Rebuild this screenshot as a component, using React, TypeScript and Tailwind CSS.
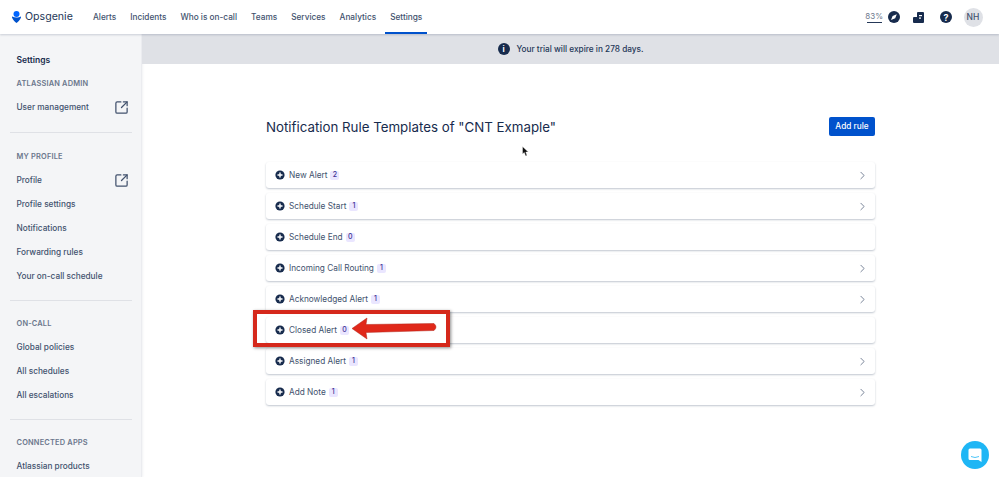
import { ChevronRight, SquareArrowOutUpRight } from 'lucide-react';

const navItems = ['Alerts', 'Incidents', 'Who is on-call', 'Teams', 'Services', 'Analytics', 'Settings'];

const rules = [
	{ name: 'New Alert', count: 2 },
	{ name: 'Schedule Start', count: 1 },
	{ name: 'Schedule End', count: 0 },
	{ name: 'Incoming Call Routing', count: 1 },
	{ name: 'Acknowledged Alert', count: 1 },
	{ name: 'Closed Alert', count: 0 },
	{ name: 'Assigned Alert', count: 1 },
	{ name: 'Add Note', count: 1 },
];

const sideGroups = [
	{ title: 'ATLASSIAN ADMIN', items: ['User management'], spacing: 'mt-[12px]' },
	{
		title: 'MY PROFILE',
		items: ['Profile', 'Profile settings', 'Notifications', 'Forwarding rules', 'Your on-call schedule'],
		spacing: '-ml-[7px] mt-[12.5px] border-t border-[#dfe1e6] pl-[7px] pt-[18.5px]',
	},
	{
		title: 'ON-CALL',
		items: ['Global policies', 'All schedules', 'All escalations'],
		spacing: '-ml-[7px] mt-[11.5px] border-t border-[#dfe1e6] pl-[7px] pt-[17.5px]',
	},
	{
		title: 'CONNECTED APPS',
		items: ['Atlassian products'],
		spacing: '-ml-[7px] mt-[11.5px] border-t border-[#dfe1e6] pl-[7px] pt-[17.5px]',
	},
];

const external = ['User management', 'Profile'];

function Header() {
	return (
		<header className="relative z-10 flex h-[34px] shrink-0 items-center bg-white pl-[12px] pr-[16.5px] shadow-[0_1px_2px_rgba(9,30,66,0.18)]">
			<div className="flex w-[81px] items-center gap-[4px]">
				<svg width="9" height="12" viewBox="0 0 9 12">
					<circle cx="4.5" cy="3" r="3" fill="#0065ff" />
					<path d="M0.2 5.4 C2.5 6.800 6.500 6.800 8.800 5.400 C9.200 5.300 9.200 6 9 6.400 C8 8.800 6.200 10.800 4.500 12 C2.800 10.800 1 8.800 0 6.400 C-0.200 6 -0.200 5.300 0.200 5.400 Z" fill="#0052cc" />
				</svg>
				<span className="text-[10.6px] leading-none text-[#253858]">Opsgenie</span>
			</div>
			<nav className="flex h-full gap-[14px]">
				{navItems.map((item) => (
					<div key={item} className="relative flex h-full items-center text-[8.25px] font-medium text-[#42526e]">
						{item}
						{item === 'Settings' && <div className="absolute -left-[5px] -right-[5px] bottom-0 h-[2px] bg-[#0052cc]" />}
					</div>
				))}
			</nav>
			<div className="ml-auto flex items-center">
				<div className="mr-[5px] flex flex-col items-center text-[8px] leading-[9px] text-[#6b778c]">
					83%
					<div className="mt-[1px] h-[1px] w-[15px] bg-[#253858]" />
				</div>
				<svg className="mr-[12.5px]" width="12" height="12" viewBox="0 0 12 12">
					<circle cx="6" cy="6" r="6" fill="#172b4d" />
					<path d="M3 9 L4.6 5 L8.8 3.2 L7.2 7.2 Z" fill="#ffffff" />
				</svg>
				<svg className="mr-[16.5px]" width="11" height="11" viewBox="0 0 11 11">
					<path d="M4 1 a1 1 0 0 1 1-1 h5 a1 1 0 0 1 1 1 v9 a1 1 0 0 1-1 1 h-9 a1 1 0 0 1-1-1 v-4 a1 1 0 0 1 1-1 h3 Z" fill="#172b4d" />
					<rect x="6" y="3" width="3" height="1.2" fill="#fff" />
					<rect x="6" y="5.500" width="2" height="1.200" fill="#fff" />
				</svg>
				<div className="mr-[11.5px] flex h-[12px] w-[12px] items-center justify-center rounded-full bg-[#172b4d] text-[9px] font-bold leading-none text-white">?</div>
				<div className="flex h-[19px] w-[19px] items-center justify-center rounded-full bg-[#dfe1e6] text-[8.5px] font-medium text-[#42526e]">NH</div>
			</div>
		</header>
	);
}

function Sidebar() {
	return (
		<aside className="flex h-full w-[142px] shrink-0 flex-col overflow-hidden border-r border-[#ebecf0] bg-[#f4f5f7] pt-[19.5px] pl-[16.5px] pr-[9px] shadow-[1px_0_2px_rgba(9,30,66,0.06)]">
			<div className="flex h-[13px] shrink-0 items-center text-[8.5px] font-semibold text-[#172b4d]">Settings</div>
			{sideGroups.map((group) => (
				<div key={group.title} className={group.spacing}>
					<div className="flex h-[11px] items-center text-[7.4px] font-semibold tracking-[0.2px] text-[#6b778c]">{group.title}</div>
					<div className="mt-[6px] flex flex-col">
						{group.items.map((item) => (
							<div key={item} className="flex h-[24px] items-center justify-between text-[8.25px] font-medium text-[#42526e]">
								{item}
								{external.includes(item) && <SquareArrowOutUpRight size={15} strokeWidth={2} className="mr-[3px] text-[#42526e]" />}
							</div>
						))}
					</div>
				</div>
			))}
		</aside>
	);
}

function RuleRow({ name, count }: { name: string; count: number }) {
	return (
		<div className="flex h-[26px] items-center rounded-[3px] bg-white pl-[9px] pr-[6.5px] shadow-[0_1px_2px_rgba(9,30,66,0.25)]">
			<svg width="10" height="10" viewBox="0 0 10 10">
				<circle cx="5" cy="5" r="4.6" fill="#172b4d" />
				<path d="M5 2.500 V7.500 M2.500 5 H7.500" stroke="#ffffff" strokeWidth="1.4" />
			</svg>
			<span className="ml-[4px] text-[8.25px] text-[#42526e]">{name}</span>
			<span className="ml-[3px] flex h-[9px] w-[9px] items-center justify-center rounded-[2px] bg-[#eae6ff] text-[7px] font-medium text-[#403294]">{count}</span>
			{count > 0 && <ChevronRight size={13} strokeWidth={1.4} className="ml-auto text-[#505f79]" />}
		</div>
	);
}

export default function App() {
	return (
		<div className="relative flex h-[477px] w-[999px] flex-col overflow-hidden bg-white font-['Inter',sans-serif]">
			<Header />
			<div className="flex min-h-0 flex-1">
				<Sidebar />
				<main className="min-w-0 flex-1">
					<div className="flex h-[30px] items-center justify-center gap-[7px] bg-[#dfe1e6] text-[8.25px] font-medium text-[#253858]">
						<div className="flex h-[12px] w-[12px] items-center justify-center rounded-full bg-[#172b4d] text-[8px] font-bold leading-none text-white">i</div>
						Your trial will expire in 278 days.
					</div>
					<div className="pl-[124px] pr-[124px] pt-[52px]">
						<div className="flex h-[20px] items-center justify-between">
							<h1 className="pt-[3px] text-[13.3px] font-normal text-[#172b4d]">Notification Rule Templates of "CNT Exmaple"</h1>
							<button className="h-[19px] w-[46px] rounded-[2px] bg-[#0052cc] text-[8.25px] font-medium text-white">Add rule</button>
						</div>
						<div className="mt-[26px] flex flex-col gap-[5px]">
							{rules.map((rule) => (
								<RuleRow key={rule.name} name={rule.name} count={rule.count} />
							))}
						</div>
					</div>
				</main>
			</div>

			{/* red callout drawn on top of the screenshot */}
			<div className="absolute left-[253px] top-[310px] h-[37px] w-[197px] border-[4px] border-[#d5281b] shadow-[1px_1px_3px_rgba(0,0,0,0.45)]" />
			<svg className="absolute left-[350px] top-[316px]" width="90" height="26" viewBox="0 0 90 26">
				<path d="M2 12.500 L17 2 L16 8.500 L84 7.500 Q88 11 84 14.500 L16 16.500 L17 23 Z" fill="#e0281a" stroke="#b3261a" strokeWidth="0.5" />
			</svg>

			{/* mouse pointer */}
			<svg className="absolute left-[522px] top-[146px]" width="8" height="11" viewBox="0 0 8 11">
				<path d="M0.5 0.5 L0.5 8 L2.3 6.5 L3.6 10 L5 9.4 L3.8 6 L6.3 6 Z" fill="#111111" stroke="#ffffff" strokeWidth="0.4" />
			</svg>

			{/* chat bubble */}
			<div className="absolute left-[961px] top-[441px] flex h-[28px] w-[28px] items-center justify-center rounded-full bg-[#1eb6f5]">
				<svg width="14" height="15" viewBox="0 0 14 15">
					<path d="M2 0.5 h10 a1.5 1.5 0 0 1 1.5 1.5 v12 l-3-2 h-8.500 a1.500 1.500 0 0 1-1.500-1.500 v-8.500 a1.500 1.500 0 0 1 1.500-1.500 Z" fill="#ffffff" />
					<path d="M3 8.500 Q7 10.500 11 8.500" fill="none" stroke="#1eb6f5" strokeWidth="0.8" />
				</svg>
			</div>
		</div>
	);
}
